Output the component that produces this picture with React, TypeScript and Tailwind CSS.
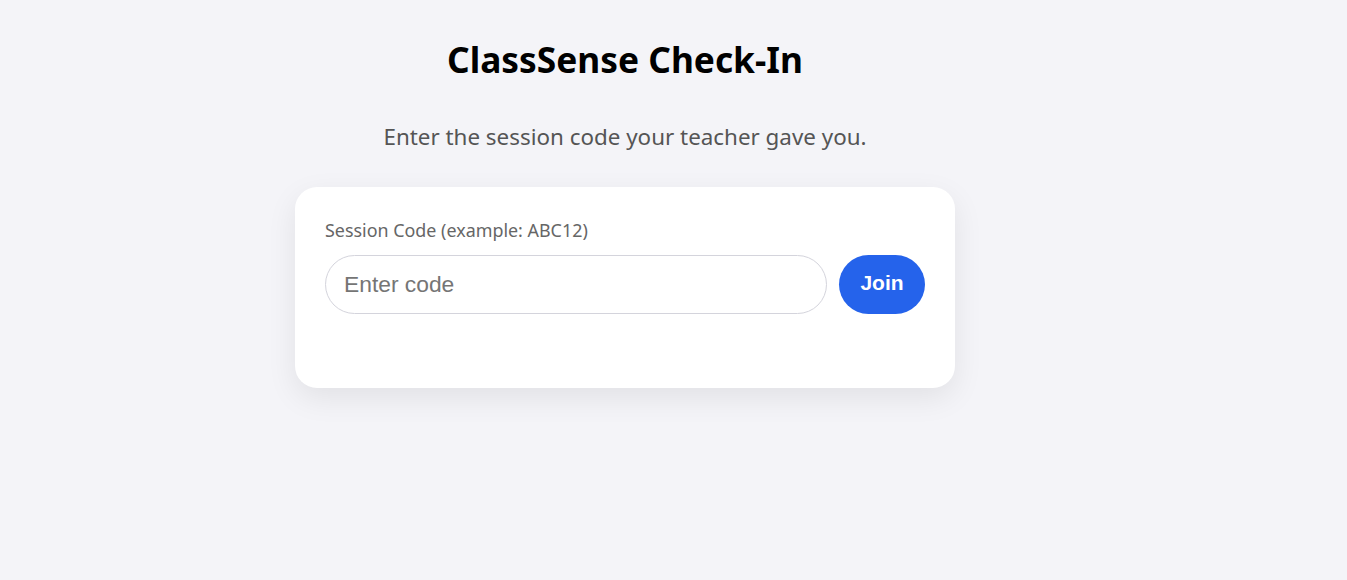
import { useState } from 'react';

export default function App() {
  const [code, setCode] = useState('');

  return (
    <div className="min-h-screen bg-[#f4f4f8]" style={{ fontFamily: '"Noto Sans", "Open Sans", sans-serif' }}>
      <div className="w-[1250px] flex flex-col items-center">
        <h1 className="mt-[35px] text-[35.3px] leading-[48px] font-bold text-black">ClassSense Check-In</h1>
        <p className="mt-[39px] text-[22.4px] leading-[30px] text-[#555]">Enter the session code your teacher gave you.</p>

        <div className="mt-[35px] w-[660px] bg-white rounded-[22px] shadow-[0_10px_30px_rgba(0,0,0,0.08)] px-[30px] pt-[31px] pb-[74px]">
          <label className="block text-[17.9px] leading-[24px] text-[#666]">Session Code (example: ABC12)</label>
          <div className="mt-[13px] flex gap-[12px]">
            <input
              type="text"
              value={code}
              onChange={(e) => setCode(e.target.value)}
              placeholder="Enter code"
              className="flex-1 h-[59px] rounded-full border border-[#d4d4dc] pl-[18px] text-[22.8px] text-[#222] placeholder:text-[#757575] outline-none"
              style={{ fontFamily: '"Liberation Sans", Arial, sans-serif' }}
            />
            <button
              className="w-[86px] h-[59px] pb-[3px] rounded-full bg-[#2563eb] text-white text-[21px] font-bold"
              style={{ fontFamily: '"Liberation Sans", Arial, sans-serif' }}
            >
              Join
            </button>
          </div>
        </div>
      </div>
    </div>
  );
}
